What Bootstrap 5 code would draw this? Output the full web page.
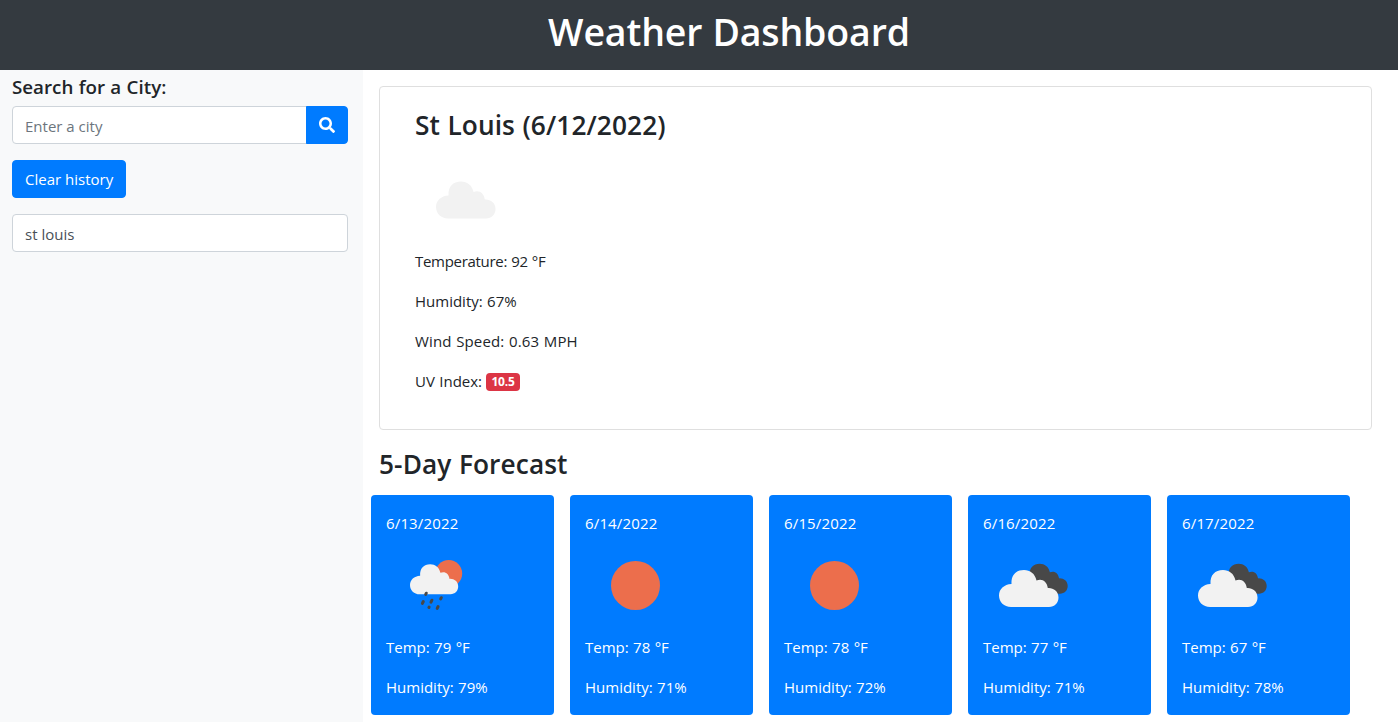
<!DOCTYPE html>
<html lang="en">
<head>
<meta charset="utf-8">
<meta name="viewport" content="width=device-width, initial-scale=1">
<title>Weather Dashboard</title>
<link rel="stylesheet" href="https://cdn.jsdelivr.net/npm/bootstrap@5.3.0/dist/css/bootstrap.min.css">
<style>
  body { font-family: "Open Sans", "Noto Sans", sans-serif; font-size: 15px; line-height: 24px; color: #212529; word-spacing: .5px; overflow: hidden; }
  h1, h2 { font-weight: 600; }
  .top-bar { height: 70px; padding: 8px 0 0 60px; background: #343a40; }
  .top-bar h1 { font-size: 37.5px; line-height: 48px; letter-spacing: -.15px; }
  .side { width: 363px; height: 652px; padding: 5px 15px 0 12px; background: #f8f9fa; }
  .side h2 { font-size: 18.75px; line-height: 24px; margin-bottom: 7px; }
  .form-control { height: 38px; font-size: 15px; border-color: #ced4da; border-radius: 4px; color: #495057; padding-top: 8px; }
  .form-control::placeholder { color: #6c757d; }
  .btn-primary { --bs-btn-bg: #007bff; --bs-btn-border-color: #007bff; --bs-btn-border-radius: 4px; --bs-btn-font-size: 15px; height: 38px; }
  .btn-find { width: 42px; padding: 0 0 3px; }
  .content-area { padding: 16px 26px 0 16px; }
  .now { height: 344px; padding: 21px 35px 0; border-color: #dfdfdf; border-radius: 4px; }
  .now .icon-box { margin: 1px 0 -2px; }
  .title-text { font-size: 26.25px; line-height: 34px; letter-spacing: .1px; }
  .tight { letter-spacing: -.3px; }
  .loose { letter-spacing: .15px; }
  .icon-box { display: block; width: 100px; height: 100px; }
  .uv { background: #dc3545; font-size: 12px; font-weight: 700; line-height: 12px; padding: 3px 5px; border-radius: 4px; letter-spacing: -.2px; vertical-align: 1px; }
  .forecast-title { margin: 17px 0 14px; }
  .days { margin-left: -8px; gap: 16px; }
  .day { width: 183px; height: 220px; padding: 16px 15px 0; background: #007bff; border-radius: 4px; color: #fff; }
  .day .icon-box { margin: 1px 0 -1px; }
</style>
</head>
<body>
<svg class="d-none" aria-hidden="true">
  <defs>
    <path id="cloud" d="M12 38C5 38 0 33 0 26.500C0 20 5 15.500 12.500 15C12 6 17 1 25 1C31 1 36 4.500 37.500 11.500C43 9 48 12.500 48.800 19C54 18.500 59.500 22 59.500 28.500C59.500 34 55.500 38 50 38Z"/>
  </defs>
</svg>
<header class="top-bar text-center text-white"><h1 class="mb-0">Weather Dashboard</h1></header>
<div class="d-flex">
  <aside class="side flex-shrink-0">
    <h2>Search for a City:</h2>
    <div class="input-group mb-3">
      <input class="form-control" type="text" placeholder="Enter a city" aria-label="City">
      <button class="btn btn-primary btn-find" type="button" aria-label="Search">
        <svg width="16" height="16" viewBox="0 0 512 512" fill="currentColor"><path d="M505 442.700 405.300 343c-4.500-4.500-10.600-7-17-7H372c27.600-35.300 44-79.700 44-128C416 93.100 322.900 0 208 0S0 93.100 0 208s93.100 208 208 208c48.300 0 92.700-16.400 128-44v16.300c0 6.400 2.500 12.500 7 17l99.700 99.700c9.400 9.400 24.600 9.400 33.900 0l28.300-28.300c9.400-9.400 9.400-24.600.1-34zM208 336c-70.700 0-128-57.200-128-128 0-70.700 57.200-128 128-128 70.700 0 128 57.200 128 128 0 70.700-57.200 128-128 128z"/></svg>
      </button>
    </div>
    <button class="btn btn-primary d-block mb-3" type="button">Clear history</button>
    <input class="form-control" type="text" value="st louis" readonly aria-label="Recent city">
  </aside>
  <main class="content-area flex-grow-1">
    <section class="card now">
      <h2 class="title-text mb-2">St Louis (6/12/2022)</h2>
      <svg class="icon-box" viewBox="0 0 100 100"><use href="#cloud" x="21" y="29.500" fill="#f2f2f2"/></svg>
      <p class="tight">Temperature: 92 °F</p>
      <p>Humidity: 67%</p>
      <p class="loose">Wind Speed: 0.63 MPH</p>
      <p>UV Index: <span class="badge uv">10.5</span></p>
    </section>
    <h2 class="title-text forecast-title">5-Day Forecast</h2>
    <div class="days d-flex">
      <article class="day">
        <p class="mb-0 loose">6/13/2022</p>
        <svg class="icon-box" viewBox="0 0 100 100">
          <circle cx="62.700" cy="37.500" r="13.500" fill="#ec6e4c"/>
          <use href="#cloud" transform="translate(24 27.500) scale(.81)" fill="#f2f2f2"/>
          <g stroke="#484848" stroke-width="3" stroke-linecap="round"><path d="M40.300 57.200l-.6 1.200M37.300 65.500l-.9 1.900M45.900 64.200l-.9 1.900M55.300 61.700l-.6 1.200M43.100 71.100l-.2.400M52.100 70.500l-.9 1.900"/></g>
        </svg>
        <p>Temp: 79 °F</p><p>Humidity: 79%</p>
      </article>
      <article class="day">
        <p class="mb-0 loose">6/14/2022</p>
        <svg class="icon-box" viewBox="0 0 100 100"><circle cx="50.500" cy="49.500" r="24.500" fill="#ec6e4c"/></svg>
        <p>Temp: 78 °F</p><p>Humidity: 71%</p>
      </article>
      <article class="day">
        <p class="mb-0 loose">6/15/2022</p>
        <svg class="icon-box" viewBox="0 0 100 100"><circle cx="50.500" cy="49.500" r="24.500" fill="#ec6e4c"/></svg>
        <p>Temp: 78 °F</p><p>Humidity: 72%</p>
      </article>
      <article class="day">
        <p class="mb-0 loose">6/16/2022</p>
        <svg class="icon-box" viewBox="0 0 100 100"><use href="#cloud" transform="translate(36.500 27) scale(.81)" fill="#484848"/><use href="#cloud" x="16" y="33" fill="#f2f2f2"/></svg>
        <p>Temp: 77 °F</p><p>Humidity: 71%</p>
      </article>
      <article class="day">
        <p class="mb-0 loose">6/17/2022</p>
        <svg class="icon-box" viewBox="0 0 100 100"><use href="#cloud" transform="translate(36.500 27) scale(.81)" fill="#484848"/><use href="#cloud" x="16" y="33" fill="#f2f2f2"/></svg>
        <p>Temp: 67 °F</p><p>Humidity: 78%</p>
      </article>
    </div>
  </main>
</div>
<script src="https://cdn.jsdelivr.net/npm/bootstrap@5.3.0/dist/js/bootstrap.bundle.min.js"></script>
</body>
</html>
